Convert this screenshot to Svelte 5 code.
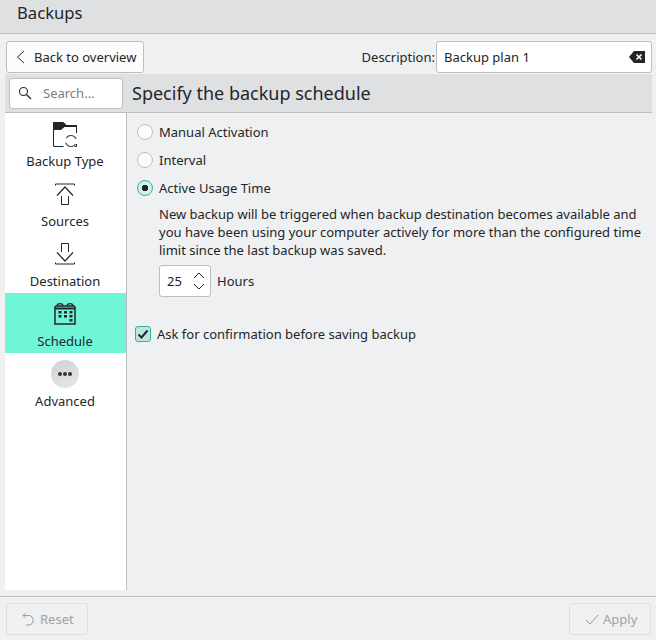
<script>
  const items = [
    { label: 'Backup Type', icon: 'type' },
    { label: 'Sources', icon: 'src' },
    { label: 'Destination', icon: 'dst' },
    { label: 'Schedule', icon: 'cal', active: true },
    { label: 'Advanced', icon: 'adv' }
  ];
</script>

<div class="page">
  <header class="title"><span>Backups</span></header>

  <div class="main">
    <div class="toolbar">
      <button class="btn back">
        <svg width="16" height="16" viewBox="0 0 16 16"><path d="M9 2 2.500 8 9 14" fill="none" stroke="#232629" stroke-width="1"/></svg>
        <span>Back to overview</span>
      </button>
      <div class="desc">
        <span class="desc-label">Description:</span>
        <div class="input desc-input">
          <span>Backup plan 1</span>
          <svg width="16" height="12" viewBox="0 0 16 12"><path d="M5 0h11v12H5L0 6z" fill="#232629"/><path d="M7.500 3.500l5 5m0-5l-5 5" stroke="#fff" stroke-width="1.600"/></svg>
        </div>
      </div>
    </div>

    <div class="band">
      <div class="input search">
        <svg width="14" height="14" viewBox="0 0 14 14"><circle cx="5.500" cy="5.500" r="4" fill="none" stroke="#232629" stroke-width="1.100"/><path d="M8.500 8.500 13 13" stroke="#232629" stroke-width="1.200"/></svg>
        <span>Search...</span>
      </div>
      <h1>Specify the backup schedule</h1>
    </div>

    <div class="body">
      <nav class="side">
        {#each items as it}
          <div class="item" class:active={it.active}>
            <div class="icon">
              {#if it.icon === 'type'}
                <svg width="24" height="25" viewBox="0 0 24 25">
                  <path d="M0 0h10.500l3 3H24v2H11.500L8 8H0z" fill="#232629"/>
                  <path d="M.500 8v16.500h10M23.500 5v6M23.500 22v2.500h-2" fill="none" stroke="#232629"/>
                  <circle cx="18" cy="19" r="5.500" fill="none" stroke="#4a4d50" stroke-width="1.200" stroke-dasharray="12 5.300" transform="rotate(-150 18 19)"/>
                </svg>
              {:else if it.icon === 'src'}
                <svg width="22" height="22" viewBox="0 0 22 22">
                  <path d="M1.500 2.500V1h19v1.500" fill="none" stroke="#232629"/>
                  <path d="M3 12.500 11 4l8 8.500" fill="none" stroke="#232629" stroke-width="1.200"/>
                  <path d="M7.500 13v8.500h7V13" fill="none" stroke="#232629"/>
                </svg>
              {:else if it.icon === 'dst'}
                <svg width="22" height="22" viewBox="0 0 22 22">
                  <path d="M7.500 9V.500h7V9" fill="none" stroke="#232629"/>
                  <path d="M3 9.500 11 18l8-8.500" fill="none" stroke="#232629" stroke-width="1.200"/>
                  <path d="M1.500 19.500V21h19v-1.500" fill="none" stroke="#232629"/>
                </svg>
              {:else if it.icon === 'cal'}
                <svg width="22" height="22" viewBox="0 0 22 22">
                  <path d="M1 4.500C1 3 2 3 3 3h16c1 0 2 0 2 1.500V21H1z" fill="none" stroke="#232629" stroke-width="1.500"/>
                  <path d="M1 5.500h20" stroke="#232629" stroke-width="2"/>
                  <path d="M3 3a2.500 2 0 0 1 6 0M13 3a2.500 2 0 0 1 6 0" fill="none" stroke="#232629" stroke-width="1.200"/>
                  <path d="M4.500 8h3v2.500h-3zM10 8h3v2.500h-3zM15.500 8h3v2.500h-3zM4.500 12h3v2.500h-3zM10 12h3v2.500h-3zM15.500 12h3v2.500h-3zM15.500 16h3v2.500h-3z" fill="#232629"/>
                </svg>
              {:else}
                <div class="adv"><i></i><i></i><i></i></div>
              {/if}
            </div>
            <div class="label">{it.label}</div>
          </div>
        {/each}
      </nav>

      <section class="content">
        <label class="row"><span class="radio"></span>Manual Activation</label>
        <label class="row"><span class="radio"></span>Interval</label>
        <label class="row"><span class="radio on"></span>Active Usage Time</label>
        <p class="info">New backup will be triggered when backup destination becomes available and you have been using your computer actively for more than the configured time limit since the last backup was saved.</p>
        <div class="spin-row">
          <div class="input spin">
            <span>25</span>
            <svg width="14" height="24" viewBox="0 0 14 24"><path d="M2 9l5-5 5 5M2 15l5 5 5-5" fill="none" stroke="#232629"/></svg>
          </div>
          <span>Hours</span>
        </div>
        <label class="check-row">
          <span class="check"><svg width="14" height="14" viewBox="0 0 14 14"><path d="M2.500 7.500 5.500 10.500 11.500 3.500" fill="none" stroke="#232629" stroke-width="2"/></svg></span>
          Ask for confirmation before saving backup
        </label>
      </section>
    </div>
  </div>

  <footer class="foot">
    <button class="btn dis">
      <svg width="14" height="14" viewBox="0 0 14 14"><path d="M3.500 1 1 3.500 3.500 6M1 3.500h6a4 4.500 0 0 1 0 9.500H4" fill="none" stroke="#9a9c9e"/></svg>
      <span>Reset</span>
    </button>
    <button class="btn dis">
      <svg width="14" height="14" viewBox="0 0 14 14"><path d="M1 8l4 4 8-9" fill="none" stroke="#9a9c9e"/></svg>
      <span>Apply</span>
    </button>
  </footer>
</div>

<style>
  :global(body) { margin: 0; background: #eff0f1; }
  .page {
    width: 656px; height: 640px; display: flex; flex-direction: column; overflow: hidden;
    font-family: "Noto Sans", sans-serif; font-size: 13px; color: #232629; background: #eff0f1;
  }
  .title {
    height: 33px; flex: none; background: #dee0e2; border-bottom: 1px solid #bcbebf;
    font-size: 16.67px; padding-left: 17px; line-height: 26px;
  }
  .main { flex: 1; display: flex; flex-direction: column; padding: 7px 4px 0 5px; min-height: 0; }
  .toolbar { display: flex; justify-content: space-between; height: 32px; flex: none; padding-left: 1px; }
  .btn {
    font: inherit; color: inherit; display: flex; align-items: center; padding: 0;
    background: #fcfcfc; border: 1px solid #bcbebf; border-radius: 3px; box-sizing: border-box; height: 32px;
  }
  .back { width: 138px; padding-left: 8px; gap: 3px; }
  .desc { display: flex; align-items: center; gap: 1px; }
  .input { background: #fff; border: 1px solid #bcbebf; border-radius: 3px; box-sizing: border-box; display: flex; align-items: center; }
  .desc-input { width: 216px; height: 32px; padding: 0 6px 0 7px; justify-content: space-between; }
  .band {
    height: 39px; flex: none; background: #dee0e2; border-bottom: 1px solid #bcbebf;
    display: flex; align-items: center; padding-left: 4px; box-sizing: border-box; margin-top: 1px;
  }
  .search { width: 114px; height: 31px; padding-left: 8px; gap: 11px; margin-right: 9px; }
  .search span { color: #7b7c7e; }
  h1 { font-size: 18px; font-weight: 400; margin: 0; line-height: 24px; }
  .body { height: 477px; display: flex; flex: none; }
  .side { width: 121px; flex: none; background: #fff; border-right: 1px solid #bcbebf; }
  .item { height: 60px; display: flex; flex-direction: column; align-items: center; padding-right: 1px; box-sizing: border-box; }
  .item.active { background: #70f5d9; }
  .icon { height: 36px; flex: none; display: flex; align-items: center; justify-content: center; padding-top: 6px; box-sizing: border-box; }
  .label { line-height: 18px; margin-top: 3px; }
  .adv {
    width: 28px; height: 28px; border-radius: 50%; background: linear-gradient(150deg, #cfd1d3, #e6e7e9);
    display: flex; align-items: center; justify-content: center; gap: 1px;
  }
  .adv i { width: 4px; height: 4px; border-radius: 50%; background: #31363b; }
  .content { flex: 1; padding: 5px 0 0 10px; }
  .row { display: flex; align-items: center; gap: 6px; height: 28px; }
  .radio {
    width: 16px; height: 16px; border-radius: 50%; background: #fcfcfc; border: 1px solid #bcbebf; box-sizing: border-box; flex: none;
  }
  .radio.on {
    background: radial-gradient(circle, #232629 0 3px, #d2efe9 3.500px); border: 1px solid #2fb59c;
  }
  .info { margin: 0 0 0 22px; width: 490px; line-height: 18px; padding-top: 3px; }
  .spin-row { display: flex; align-items: center; gap: 6px; margin: 6px 0 0 22px; }
  .spin { width: 52px; height: 32px; padding: 0 4px 0 7px; justify-content: space-between; }
  .check-row { display: flex; align-items: center; gap: 6px; margin-top: 21px; margin-left: -2px; height: 32px; }
  .check {
    width: 16px; height: 16px; box-sizing: border-box; border: 1px solid #2fb59c; border-radius: 3px; background: #bfe6de;
    display: flex; align-items: center; justify-content: center; flex: none;
  }
  .foot {
    flex: none; height: 44px; margin-top: 5px; border-top: 1px solid #bcbebf; display: flex; justify-content: space-between;
    padding: 6px 5px 0 6px; box-sizing: border-box; align-items: flex-start;
  }
  .dis { background: #eff0f1; border-color: #dcdee0; color: #a0a2a4; padding-left: 15px; gap: 4px; width: 82px; }
</style>
